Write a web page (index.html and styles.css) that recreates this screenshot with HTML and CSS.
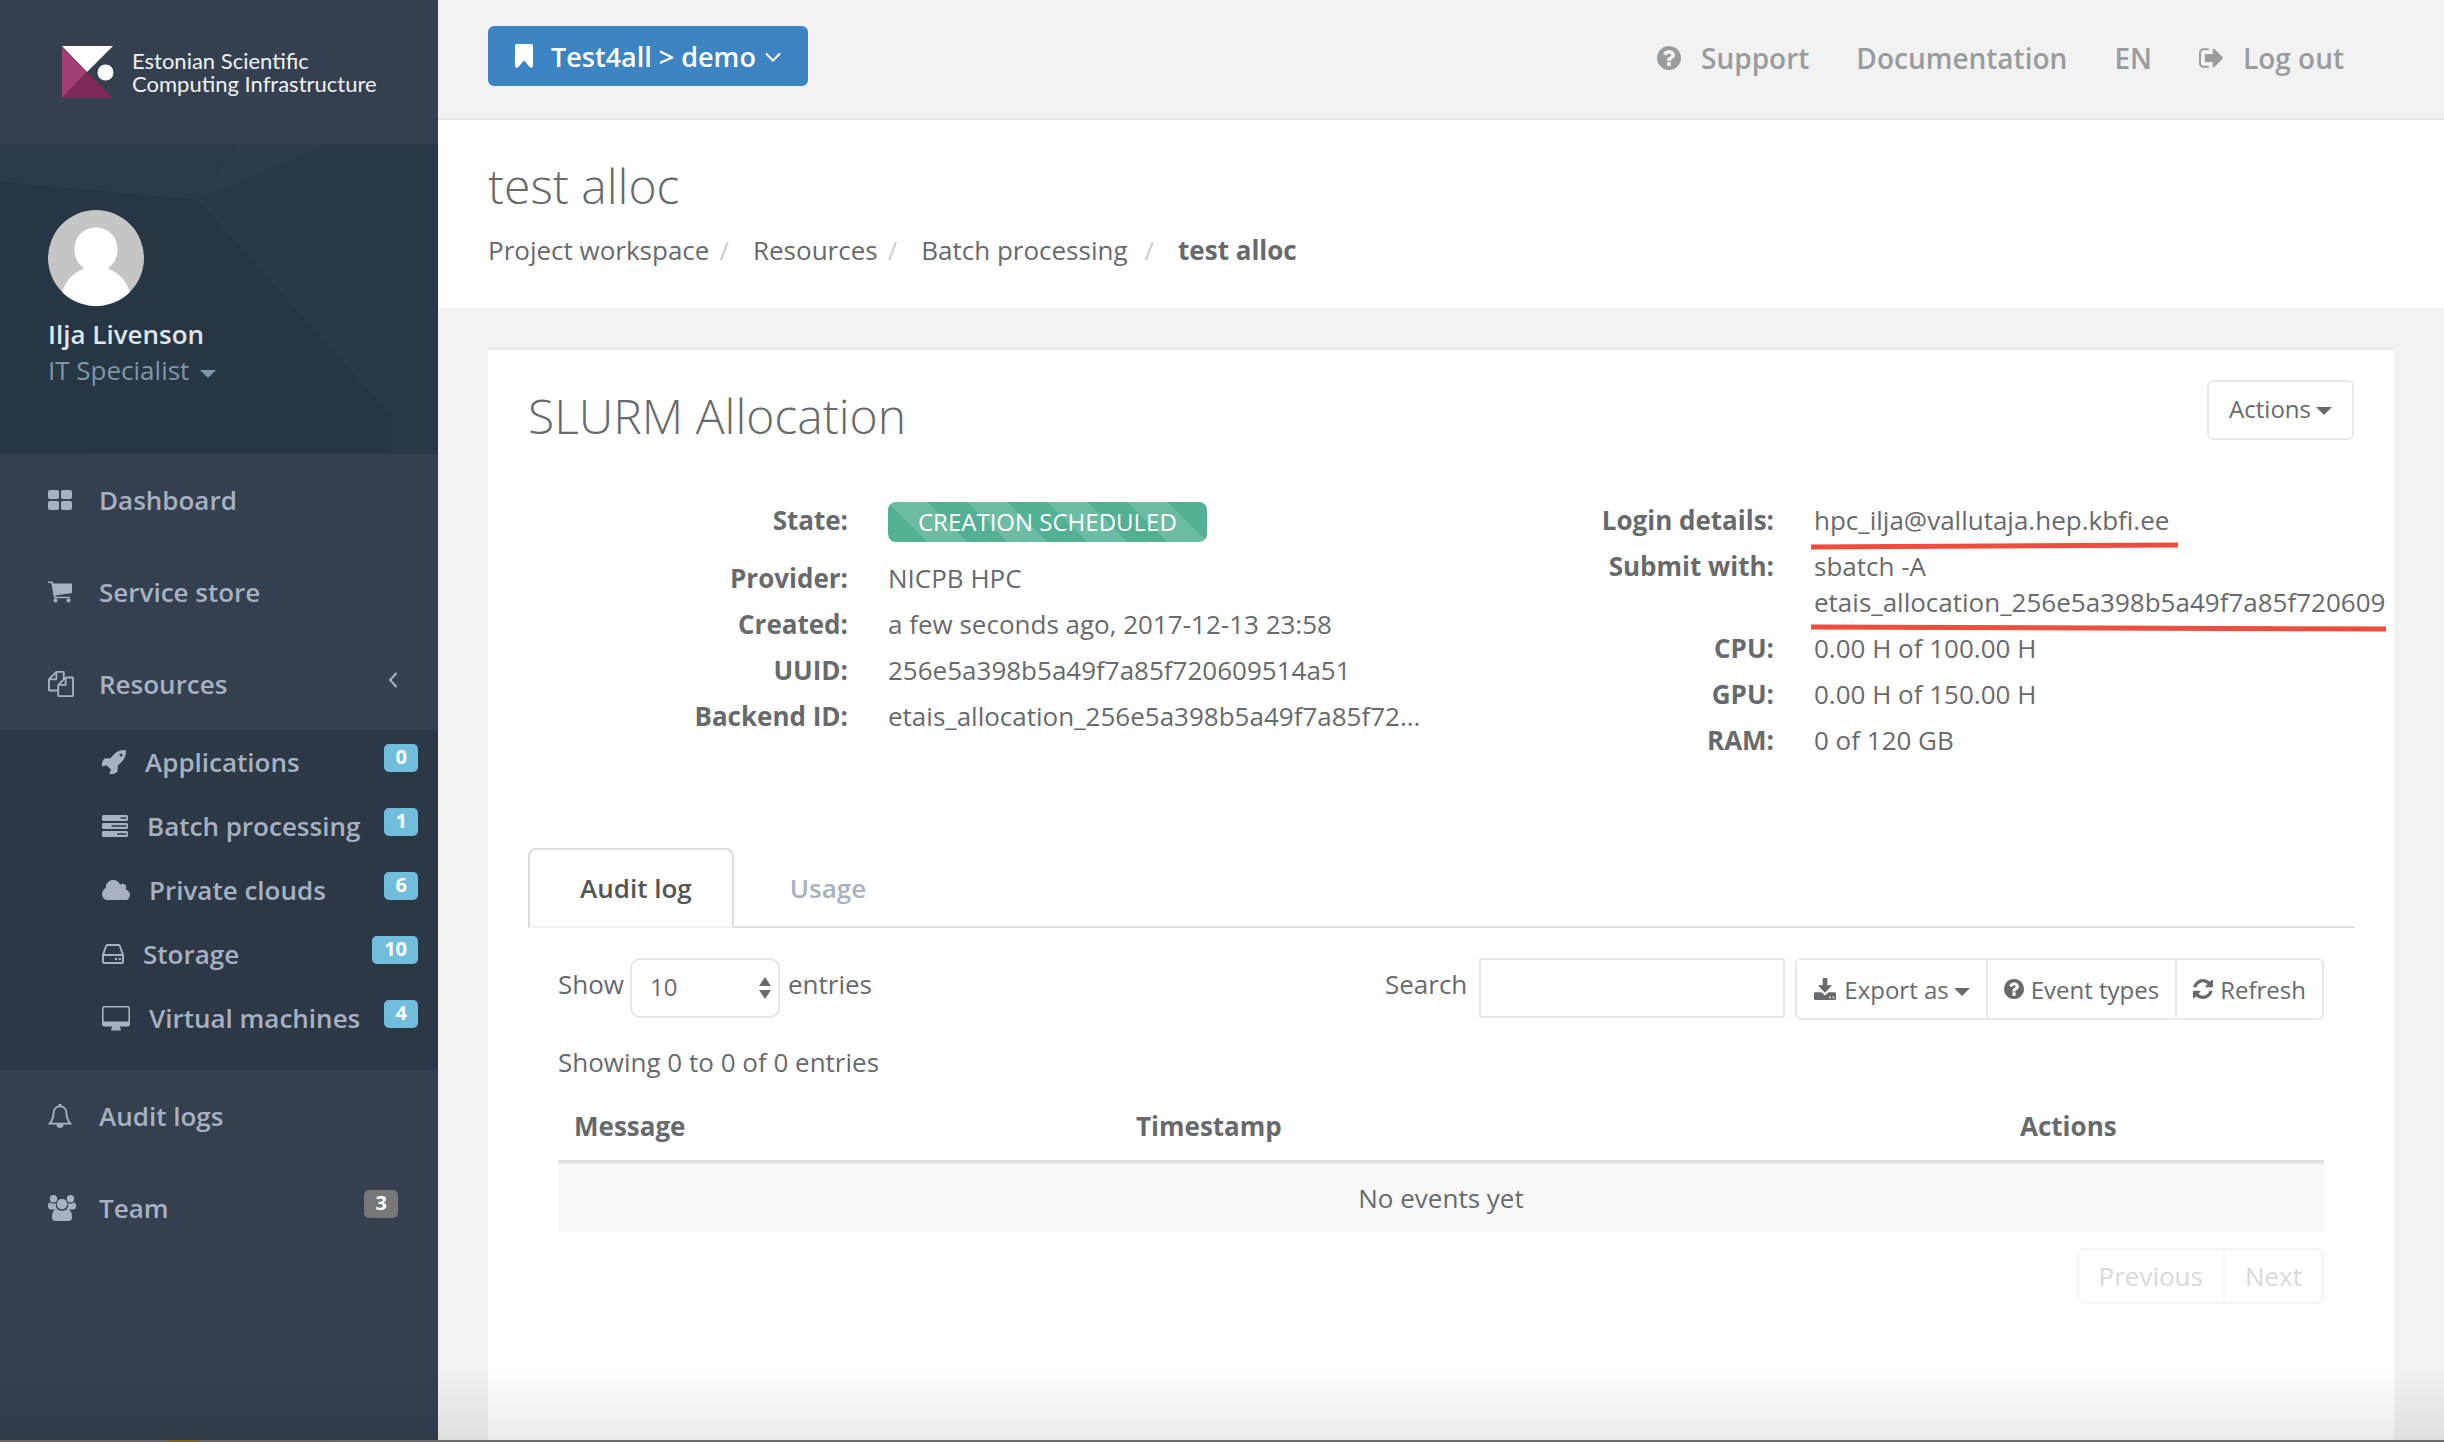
FILE: index.html
```html
<!DOCTYPE html>
<html lang="en">
<head>
    <meta charset="utf-8">
    <title>test alloc</title>
    <link rel="stylesheet" href="styles.css">
</head>
<body>
<div id="wrapper">

	<nav class="sidebar">
		<a class="logo" href="#">
			<svg class="logo-mark" viewBox="0 0 52 52">
				<path fill="#fff" d="M0 0h51L25 26z"/>
				<path fill="#a33d76" d="M0 1l25 25L0 52z"/>
				<path fill="#7d2858" d="M25 26l26 26H0z"/>
				<circle fill="#fff" cx="43.500" cy="26.500" r="8"/>
			</svg>
			<span class="logo-text">Estonian Scientific<br>Computing Infrastructure</span>
		</a>

		<div class="profile">
			<svg class="profile-bg" viewBox="0 0 438 310" preserveAspectRatio="none">
				<path fill="#2a3a49" d="M0 0h238l-40 56L0 38z"/>
				<path fill="#2b3b4a" d="M238 0h90L198 56z"/>
				<path fill="#293948" d="M328 0h110v228l-47 43L198 56z"/>
				<path fill="#283846" d="M391 271l47-43v82h-50z"/>
				<path fill="#273746" d="M0 252l48 2 46 56H0z"/>
			</svg>
			<svg class="avatar" viewBox="0 0 96 96">
				<clipPath id="round"><circle cx="48" cy="48" r="48"/></clipPath>
				<g clip-path="url(#round)">
					<path fill="#c5c5c5" d="M0 0h96v96H0z"/>
					<path fill="#fff" d="M48 17.500c12 0 21.500 9 21.500 21.500 0 9-4 15-9.500 19.500C72 63 79 72 83 85v11H13V85c4-13 11-22 23-26.500-5.500-4.500-9.500-10.500-9.500-19.500C26.500 26.500 36 17.500 48 17.500z"/>
				</g>
			</svg>
			<a class="profile-name" href="#">Ilja Livenson</a>
			<a class="profile-role" href="#">IT Specialist <span class="caret"></span></a>
		</div>

		<ul class="menu">
			<li><a href="#">
				<svg class="icon" viewBox="0 0 24 20"><rect width="11" height="9" rx="2"/><rect x="13" width="11" height="9" rx="2"/><rect y="11" width="11" height="9" rx="2"/><rect x="13" y="11" width="11" height="9" rx="2"/></svg>
				Dashboard</a></li>
			<li><a href="#">
				<svg class="icon" viewBox="0 0 24 21"><path d="M0 0h4.500l.7 2H24v9.500L7.200 14l.4 1.200H22v1.600H6L3.400 1.600H0z"/><circle cx="7.500" cy="19" r="2"/><circle cx="20.500" cy="19" r="2"/></svg>
				Service store</a></li>
			<li><a href="#">
				<svg class="icon files" viewBox="0 0 1792 1792"><path d="M1696 384q40 0 68 28t28 68v1216q0 40-28 68t-68 28h-960q-40 0-68-28t-28-68v-288h-544q-40 0-68-28t-28-68v-672q0-40 20-88t48-76l408-408q28-28 76-48t88-20h416q40 0 68 28t28 68v328q68-40 128-40h416zm-544 213l-299 299h299v-299zm-640-384l-299 299h299v-299zm196 647l316-316v-416h-384v416q0 40-28 68t-68 28h-416v640h512v-256q0-40 20-88t48-76zm956 804v-1152h-384v416q0 40-28 68t-68 28h-416v640h896z"/></svg>
				Resources
				<svg class="arrow" viewBox="0 0 10 16"><path d="M8.500 1L2 8l6.500 7"/></svg></a>

				<ul class="submenu">
					<li><a href="#">
						<svg class="w24" viewBox="128 128 1536 1536"><path d="M1440 448q0-40-28-68t-68-28-68 28-28 68 28 68 68 28 68-28 28-68zm224-288q0 249-75.500 430.500t-253.500 360.500q-81 80-195 176l-20 379q-2 16-16 26l-384 224q-7 4-16 4-12 0-23-9l-64-64q-13-14-8-32l85-276-281-281-276 85q-3 1-9 1-14 0-23-9l-64-64q-17-19-5-39l224-384q10-14 26-16l379-20q96-114 176-195 188-187 358-258t431-71q14 0 24 9.500t10 22.500z"/></svg>
						Applications <span class="label">0</span></a></li>
					<li><a href="#">
						<svg class="w26" viewBox="0 0 26 22"><path fill-rule="evenodd" d="M1 0h24l1 1v4l-1 1H1L0 5V1zM18.500 2.300v1.400h6V2.300zM1 8h24l1 1v4l-1 1H1l-1-1V9zm8.500 2.300v1.400h15v-1.400zM1 16h24l1 1v4l-1 1H1l-1-1v-4zm14 2.300v1.400h9.500v-1.400z"/></svg>
						Batch processing <span class="label">1</span></a></li>
					<li><a href="#">
						<svg class="w28" viewBox="64 128 1920 1408"><path d="M1984 1152q0 159-112.500 271.500t-271.500 112.500h-1088q-185 0-316.500-131.500t-131.500-316.500q0-132 71-241.500t187-163.500q-2-28-2-43 0-212 150-362t362-150q158 0 286.500 88t187.500 230q70-62 166-62 106 0 181 75t75 181q0 75-41 138 129 30 213 134.500t84 239.500z"/></svg>
						Private clouds <span class="label">6</span></a></li>
					<li><a href="#">
						<svg class="w22" viewBox="0 0 22 20"><path class="line" d="M1 11L4 2.200Q4.400 1 5.600 1h10.800q1.200 0 1.600 1.200L21 11v6.500q0 1.500-1.500 1.500h-17Q1 19 1 17.500zh20"/><circle cx="14" cy="15" r="1.300"/><circle cx="17.800" cy="15" r="1.300"/></svg>
						Storage <span class="label">10</span></a></li>
					<li><a href="#">
						<svg class="w28" viewBox="0 0 28 25"><path fill-rule="evenodd" d="M2 0h24q2 0 2 2v16.500q0 2-2 2h-8q0 1.500.8 2.500v1.500H9.200V23q.8-1 .8-2.500H2q-2 0-2-2V2q0-2 2-2zm.3 1.600q-.7 0-.7.700v12.400q0 .7.700.7h23.400q.7 0 .7-.7V2.300q0-.7-.7-.7z"/></svg>
						Virtual machines <span class="label">4</span></a></li>
				</ul>
			</li>
			<li><a href="#">
				<svg class="icon" viewBox="0 0 26 26"><path class="line" d="M13 2.500c4.500 0 7 3.200 7 7.500 0 6 2 8.500 4.200 11.200H1.800C4 18.500 6 16 6 10c0-4.300 2.500-7.500 7-7.500z"/><path d="M11.500 0h3v3h-3zM9 22h8c0 2.300-1.700 4-4 4s-4-1.700-4-4z"/></svg>
				Audit logs</a></li>
			<li><a href="#">
				<svg class="icon wide" viewBox="0 0 28 26"><circle cx="5.500" cy="3.800" r="3.700"/><circle cx="22.500" cy="3.800" r="3.700"/><circle cx="14" cy="9" r="5.300"/><path d="M3 8q2.300 1.200 4.800.3-.6 3.700 1.800 6.100H3q-3 0-3-3Q0 7.200 2 7.500zM25 8q-2.300 1.200-4.800.3.600 3.700-1.800 6.100H25q3 0 3-3 0-4.200-2-3.900zM9 14.200q5 3 10 0 5 .2 5 8 0 3.800-3.500 3.800h-13Q4 26 4 22.200q0-7.800 5-8z"/></svg>
				Team <span class="label label-default">3</span></a></li>
		</ul>
	</nav>

	<div class="page">
		<header class="topbar">
			<button type="button" class="btn-workspace">
				<svg viewBox="442 128 1156 1536"><path d="M1482 128q23 0 44 9 33 13 52.500 41t19.500 62v1289q0 34-19.500 62t-52.500 41q-19 8-44 8-48 0-83-32l-379-424-379 424q-36 33-83 33-23 0-44-9-33-13-52.500-41t-19.500-62v-1289q0-34 19.500-62t52.500-41q21-9 44-9z"/></svg>
				<span>Test4all &gt; demo</span>
				<svg class="angle" viewBox="0 0 16 10"><path d="M1 1.500l7 7 7-7"/></svg>
			</button>
			<ul class="toplinks">
				<li><a href="#">
					<svg viewBox="128 128 1536 1536"><path d="M1024 1376v-192q0-14-9-23t-23-9h-192q-14 0-23 9t-9 23v192q0 14 9 23t23 9h192q14 0 23-9t9-23zm256-672q0-88-55.500-163t-138.500-116-170-41q-243 0-371 213-15 24 8 42l132 100q7 6 19 6 16 0 25-12 53-68 86-92 34-24 86-24 48 0 85.500 26t37.500 59q0 38-20 61t-68 45q-63 28-115.500 86.500t-52.500 125.500v36q0 14 9 23t23 9h192q14 0 23-9t9-23q0-19 21.500-49.500t54.500-49.500q32-18 49-28.500t46-35 44.500-48 28-60.500 12.500-81zm384 192q0 209-103 385.500t-279.500 279.500-385.500 103-385.500-103-279.500-279.500-103-385.500 103-385.500 279.500-279.500 385.500-103 385.500 103 279.500 279.500 103 385.500z"/></svg>
					Support</a></li>
				<li><a href="#">Documentation</a></li>
				<li><a href="#">EN</a></li>
				<li><a href="#">
					<svg viewBox="64 128 1568 1536"><path d="M704 1440q0 4 1 20t.5 26.500-3 23.500-10 19.500-20.500 6.500h-320q-119 0-203.500-84.500t-84.500-203.500v-704q0-119 84.500-203.500t203.500-84.500h320q13 0 22.500 9.500t9.500 22.500q0 4 1 20t.5 26.500-3 23.500-10 19.500-20.500 6.500h-320q-66 0-113 47t-47 113v704q0 66 47 113t113 47h312l11.500 1 11.500 3 8 5.500 7 9 2 13.500zm928-544q0 26-19 45l-544 544q-19 19-45 19t-45-19-19-45v-288h-448q-26 0-45-19t-19-45v-384q0-26 19-45t45-19h448v-288q0-26 19-45t45-19 45 19l544 544q19 19 19 45z"/></svg>
					Log out</a></li>
			</ul>
		</header>

		<div class="heading">
			<h1>test alloc</h1>
			<ol class="breadcrumb">
				<li><a href="#">Project workspace</a></li>
				<li><a href="#">Resources</a></li>
				<li><a href="#">Batch processing</a></li>
				<li class="active">test alloc</li>
			</ol>
		</div>

		<main class="panel">
			<div class="panel-head">
				<h2>SLURM Allocation</h2>
				<button type="button" class="btn btn-actions">Actions <span class="caret"></span></button>
			</div>

			<div class="details">
				<dl>
					<dt>State:</dt>
					<dd><span class="state">CREATION SCHEDULED</span></dd>
					<dt>Provider:</dt>
					<dd>NICPB HPC</dd>
					<dt>Created:</dt>
					<dd>a few seconds ago, 2017-12-13 23:58</dd>
					<dt>UUID:</dt>
					<dd>256e5a398b5a49f7a85f720609514a51</dd>
					<dt>Backend ID:</dt>
					<dd>etais_allocation_256e5a398b5a49f7a85f72...</dd>
				</dl>
				<dl>
					<dt>Login details:</dt>
					<dd><span class="marked">hpc_ilja@vallutaja.hep.kbfi.ee<svg class="stroke stroke-over" viewBox="0 0 370 8" preserveAspectRatio="none"><path d="M0 5l370-2"/></svg></span></dd>
					<dt>Submit with:</dt>
					<dd>sbatch -A<br><span class="marked">etais_allocation_256e5a398b5a49f7a85f720609<svg class="stroke" viewBox="0 0 370 8" preserveAspectRatio="none"><path d="M0 3l370 2"/></svg></span></dd>
					<dt>CPU:</dt>
					<dd>0.00 H of 100.00 H</dd>
					<dt>GPU:</dt>
					<dd>0.00 H of 150.00 H</dd>
					<dt>RAM:</dt>
					<dd>0 of 120 GB</dd>
				</dl>
			</div>

			<ul class="tabs">
				<li class="active"><a href="#">Audit log</a></li>
				<li><a href="#">Usage</a></li>
			</ul>

			<div class="tab-content">
				<div class="toolbar">
					<div class="length">
						<label for="length">Show</label>
						<span class="select">
							<select id="length"><option>10</option></select>
							<svg viewBox="0 0 12 22"><path d="M6 0l6 9H0zM6 22l6-9H0z"/></svg>
						</span>
						<label for="length">entries</label>
					</div>
					<div class="tools">
						<label for="search">Search</label>
						<input type="text" id="search">
						<div class="btn-group">
							<button type="button" class="btn">
								<svg class="w24" viewBox="0 0 24 24"><path fill-rule="evenodd" d="M9.500 0h5v8h5.300L12 16 4.200 8h5.300zM1.500 15.500h6.700l3.800 3.600 3.800-3.600h6.700q1.500 0 1.500 1.500v5.500q0 1.500-1.500 1.500h-21Q0 24 0 22.500V17q0-1.500 1.500-1.500zm15 4.700v1.800H18v-1.800zm4 0v1.800H22v-1.800z"/></svg>
								Export as <span class="caret"></span></button>
							<button type="button" class="btn">
								<svg viewBox="128 128 1536 1536"><path d="M1024 1376v-192q0-14-9-23t-23-9h-192q-14 0-23 9t-9 23v192q0 14 9 23t23 9h192q14 0 23-9t9-23zm256-672q0-88-55.500-163t-138.500-116-170-41q-243 0-371 213-15 24 8 42l132 100q7 6 19 6 16 0 25-12 53-68 86-92 34-24 86-24 48 0 85.500 26t37.500 59q0 38-20 61t-68 45q-63 28-115.500 86.500t-52.500 125.500v36q0 14 9 23t23 9h192q14 0 23-9t9-23q0-19 21.500-49.500t54.500-49.500q32-18 49-28.500t46-35 44.500-48 28-60.500 12.500-81zm384 192q0 209-103 385.500t-279.500 279.500-385.500 103-385.500-103-279.500-279.500-103-385.500 103-385.500 279.500-279.500 385.500-103 385.500 103 279.500 279.500 103 385.500z"/></svg>
								Event types</button>
							<button type="button" class="btn">
								<svg viewBox="128 128 1536 1536"><path d="M1639 1056q0 5-1 7-64 268-268 434.500t-478 166.500q-146 0-282.500-55t-243.500-157l-129 129q-19 19-45 19t-45-19-19-45v-448q0-26 19-45t45-19h448q26 0 45 19t19 45-19 45l-137 137q71 66 161 102t187 36q134 0 250-65t186-179q11-17 53-117 8-23 30-23h192q13 0 22.500 9.500t9.500 22.500zm25-800v448q0 26-19 45t-45 19h-448q-26 0-45-19t-19-45 19-45l138-138q-148-137-349-137-134 0-250 65t-186 179q-11 17-53 117-8 23-30 23h-199q-13 0-22.500-9.500t-9.500-22.500v-7q65-268 270-434.500t480-166.500q146 0 284 55.500t245 156.500l130-129q19-19 45-19t45 19 19 45z"/></svg>
								Refresh</button>
						</div>
					</div>
				</div>

				<p class="info">Showing 0 to 0 of 0 entries</p>

				<table class="events">
					<thead>
						<tr><th class="col-message">Message</th><th>Timestamp</th><th class="col-actions">Actions</th></tr>
					</thead>
					<tbody>
						<tr><td colspan="3">No events yet</td></tr>
					</tbody>
				</table>

				<div class="pagination">
					<button type="button" disabled>Previous</button>
					<button type="button" disabled>Next</button>
				</div>
			</div>
		</main>
	</div>

	<div class="fade"></div>
</div>
<div class="edge"></div>
</body>
</html>
```

FILE: styles.css
```css
/* Reset */

* { margin: 0; padding: 0; box-sizing: border-box; }

ul, ol { list-style: none; }

a { color: inherit; text-decoration: none; }

button, input, select {
	font-family: inherit;
	color: inherit;
}

svg { flex: none; fill: currentColor; }


/* Page */

body {
	font-family: "Open Sans", sans-serif;
	font-size: 26px;
	line-height: 36px;
	color: #676a6c;
	background: #f2f2f2;
	overflow-x: hidden;
}

#wrapper {
	position: relative;
	display: flex;
	min-height: calc(100vh - 2px);
}

.page {
	flex: 1;
	min-width: 0;
	display: flex;
	flex-direction: column;
}

/* window shadow along the bottom */

.fade {
	position: absolute;
	left: 0; right: 0; bottom: 0;
	height: 72px;
	background: linear-gradient(rgba(0, 0, 0, 0), rgba(0, 0, 0, 0.08));
	pointer-events: none;
}

.edge {
	height: 2px;
	background: linear-gradient(90deg, #6b6462 167px, #7d6520 167px, #7d6520 197px, #6b6462 197px, #6b6462 330px, #696969 330px);
}

.caret {
	display: inline-block;
	border: 8px solid transparent;
	border-top-color: currentColor;
	border-bottom: 0;
}


/* Sidebar */

.sidebar {
	width: 438px;
	flex: none;
	background: #344050;
	color: #a7b1c2;
	font-weight: 600;
}

.logo {
	display: flex;
	align-items: center;
	gap: 18px;
	height: 144px;
	padding-left: 62px;
}

.logo-mark {
	width: 52px;
	height: 52px;
}

.logo-text {
	font-family: Lato, sans-serif;
	font-size: 22px;
	font-weight: 400;
	line-height: 23px;
	white-space: nowrap;
	color: #f0f1f3;
}

.profile {
	position: relative;
	display: flex;
	flex-direction: column;
	align-items: flex-start;
	height: 310px;
	padding: 66px 48px;
	background: #263645;
}

.profile-bg {
	position: absolute;
	left: 0; top: 0;
	width: 100%;
	height: 100%;
}

.avatar, .profile-name, .profile-role {
	position: relative;
}

.avatar {
	width: 96px;
	height: 96px;
	margin-bottom: 10px;
}

.profile-name { color: #dfe4ed; }

.profile-role {
	display: flex;
	align-items: center;
	gap: 11px;
	color: #8095a8;
	font-weight: 400;
}

.profile-role .caret { margin-top: 8px; }

.menu a {
	display: flex;
	align-items: center;
	padding: 28px 40px 28px 48px;
}

.menu .icon {
	width: 24px;
	height: 26px;
	margin-right: 27px;
}

.menu .icon.files {
	width: 26px;
	margin-right: 25px;
}

.menu .icon.wide {
	width: 28px;
	margin-right: 23px;
}

.arrow {
	width: 10px;
	height: 16px;
	margin: 0 0 8px auto;
}

.arrow path, .angle path, .line {
	fill: none;
	stroke: currentColor;
	stroke-width: 2;
}

.menu .submenu {
	padding-bottom: 20px;
	background: #2d3846;
}

.submenu a {
	gap: 19px;
	padding: 14px 20px 14px 102px;
}

.w22 { width: 22px; }
.w24 { width: 24px; }
.w26 { width: 26px; }
.w28 { width: 28px; }

.label {
	margin: 0 0 8px auto;
	padding: 0 11px 2px 12px;
	border-radius: 5px;
	background: #70bedb;
	color: #fff;
	font-size: 20px;
	font-weight: 700;
	line-height: 26px;
}

.label-default { background: #777; }


/* Top bar */

.topbar {
	display: flex;
	justify-content: space-between;
	align-items: flex-start;
	padding: 26px 100px 32px 50px;
	border-bottom: 2px solid #e8e8e8;
}

.btn-workspace {
	display: flex;
	align-items: center;
	height: 60px;
	padding: 0 27px 0 26px;
	border: 0;
	border-radius: 6px;
	background: #3d84c3;
	color: #fff;
	font-size: 27px;
	font-weight: 600;
}

.btn-workspace svg {
	width: 20px;
	height: 24px;
	margin-right: 17px;
}

.btn-workspace .angle {
	width: 16px;
	height: 10px;
	margin: 2px 0 0 9px;
}

.toplinks {
	display: flex;
	gap: 47px;
	padding-top: 12px;
	color: #999c9e;
	font-size: 28px;
	font-weight: 600;
	line-height: 40px;
}

.toplinks a {
	display: flex;
	align-items: center;
	gap: 20px;
}

.toplinks svg {
	width: 24px;
	height: 24px;
}


/* Heading */

.heading {
	padding: 40px 50px;
	background: #fff;
}

h1, h2 {
	font-size: 48px;
	font-weight: 300;
	line-height: 52px;
}

.breadcrumb {
	display: flex;
	margin-top: 20px;
}

.breadcrumb li + li:before {
	content: "/";
	padding: 0 24px 0 10px;
	color: #ccc;
}

.breadcrumb .active { font-weight: 700; }

.breadcrumb .active:before {
	padding-left: 17px;
	font-weight: 400;
}


/* Panel */

.panel {
	flex: 1;
	margin: 40px 50px 0;
	padding: 30px 40px;
	border-top: 2px solid #e8e8e8;
	background: #fff;
}

.panel-head {
	display: flex;
	justify-content: space-between;
	align-items: flex-start;
}

.panel-head h2 { margin-top: 10px; }

.btn {
	display: flex;
	align-items: center;
	gap: 7px;
	height: 60px;
	padding: 0 20px;
	border: 2px solid #e8e8e8;
	border-radius: 6px;
	background: #fff;
	font-size: 24px;
}

.btn .caret { margin: 5px 0 0 -2px; }

.btn svg {
	width: 20px;
	height: 22px;
}

.btn .w24 { width: 24px; }

.btn-actions { padding-bottom: 4px; }


/* Details */

.details {
	display: grid;
	grid-template-columns: 1fr 1fr;
	gap: 26px;
	margin-top: 60px;
}

.details dl {
	display: grid;
	grid-template-columns: 320px minmax(0, 1fr);
	gap: 10px 40px;
	align-content: start;
}

.details dt {
	font-weight: 700;
	text-align: right;
}

.details dd { white-space: nowrap; }

.state {
	display: inline-block;
	margin-bottom: 8px;
	padding: 0 30px;
	border-radius: 8px;
	background-color: #52b095;
	background-image: linear-gradient(45deg, rgba(255, 255, 255, .15) 25%, transparent 25%, transparent 50%, rgba(255, 255, 255, .15) 50%, rgba(255, 255, 255, .15) 75%, transparent 75%, transparent);
	background-size: 80px 80px;
	color: #fff;
	font-size: 24px;
	line-height: 40px;
	vertical-align: top;
}

.marked {
	position: relative;
	display: inline-block;
	vertical-align: top;
}

.stroke {
	position: absolute;
	left: -3px;
	top: 40px;
	width: calc(100% + 4px);
	height: 8px;
}

.stroke-over { width: calc(100% + 12px); }

.stroke path {
	stroke: #ee4d3d;
	stroke-width: 5;
}


/* Tabs */

.tabs {
	display: flex;
	gap: 4px;
	margin-top: 90px;
	border-bottom: 2px solid #ddd;
	font-weight: 600;
}

.tabs a {
	display: block;
	margin-bottom: -2px;
	padding: 20px 40px 20px 50px;
	border: 2px solid transparent;
	border-radius: 8px 8px 0 0;
	color: #a7b1c2;
}

.tabs .active a {
	border-color: #ddd #ddd #f2f2f2;
	background: #fff;
	color: #555;
}

.tab-content { padding: 30px; }

.toolbar {
	display: flex;
	justify-content: space-between;
	align-items: flex-start;
}

.length, .tools {
	display: flex;
}

.length label, .tools label { margin-top: 8px; }

.select {
	position: relative;
	margin: 0 8px 0 6px;
}

.select select {
	display: block;
	width: 150px;
	height: 60px;
	padding: 0 18px 4px;
	border: 2px solid #e5e6e7;
	border-radius: 10px;
	background: #fff;
	font-size: 24px;
	appearance: none;
}

.select svg {
	position: absolute;
	right: 9px;
	top: 19px;
	width: 12px;
	height: 22px;
	pointer-events: none;
}

.tools input {
	width: 306px;
	height: 60px;
	margin: 0 10px 0 12px;
	padding: 0 12px;
	border: 2px solid #e5e6e7;
	border-radius: 2px;
	background: #fff;
	font-size: 26px;
}

.btn-group { display: flex; }

.btn-group .btn {
	height: 62px;
	margin-left: -2px;
	padding: 0 16px;
	border-radius: 0;
}

.btn-group .btn:first-child {
	margin-left: 0;
	border-radius: 6px 0 0 6px;
}

.btn-group .btn:last-child { border-radius: 0 6px 6px 0; }

.info { margin-top: 24px; }


/* Events table */

.events {
	width: 100%;
	margin-top: 12px;
	border-collapse: separate;
	border-spacing: 0;
	table-layout: fixed;
}

.events th {
	padding: 16px;
	border-bottom: 2px solid #ddd;
	text-align: left;
}

.events td {
	padding: 16px;
	border-top: 2px solid #e8e8e8;
	background: #f9f9f9;
	text-align: center;
}

.col-message { width: 562px; }
.col-actions { width: 320px; }


/* Pagination */

.pagination {
	display: flex;
	justify-content: flex-end;
	margin-top: 16px;
}

.pagination button {
	padding: 8px 20px;
	border: 2px solid #f5f5f5;
	background: #fff;
	color: #d9dadb;
	font-size: 26px;
	line-height: 36px;
}

.pagination button:first-child { border-radius: 8px 0 0 8px; }

.pagination button:last-child {
	margin-left: -2px;
	border-radius: 0 8px 8px 0;
}
```
